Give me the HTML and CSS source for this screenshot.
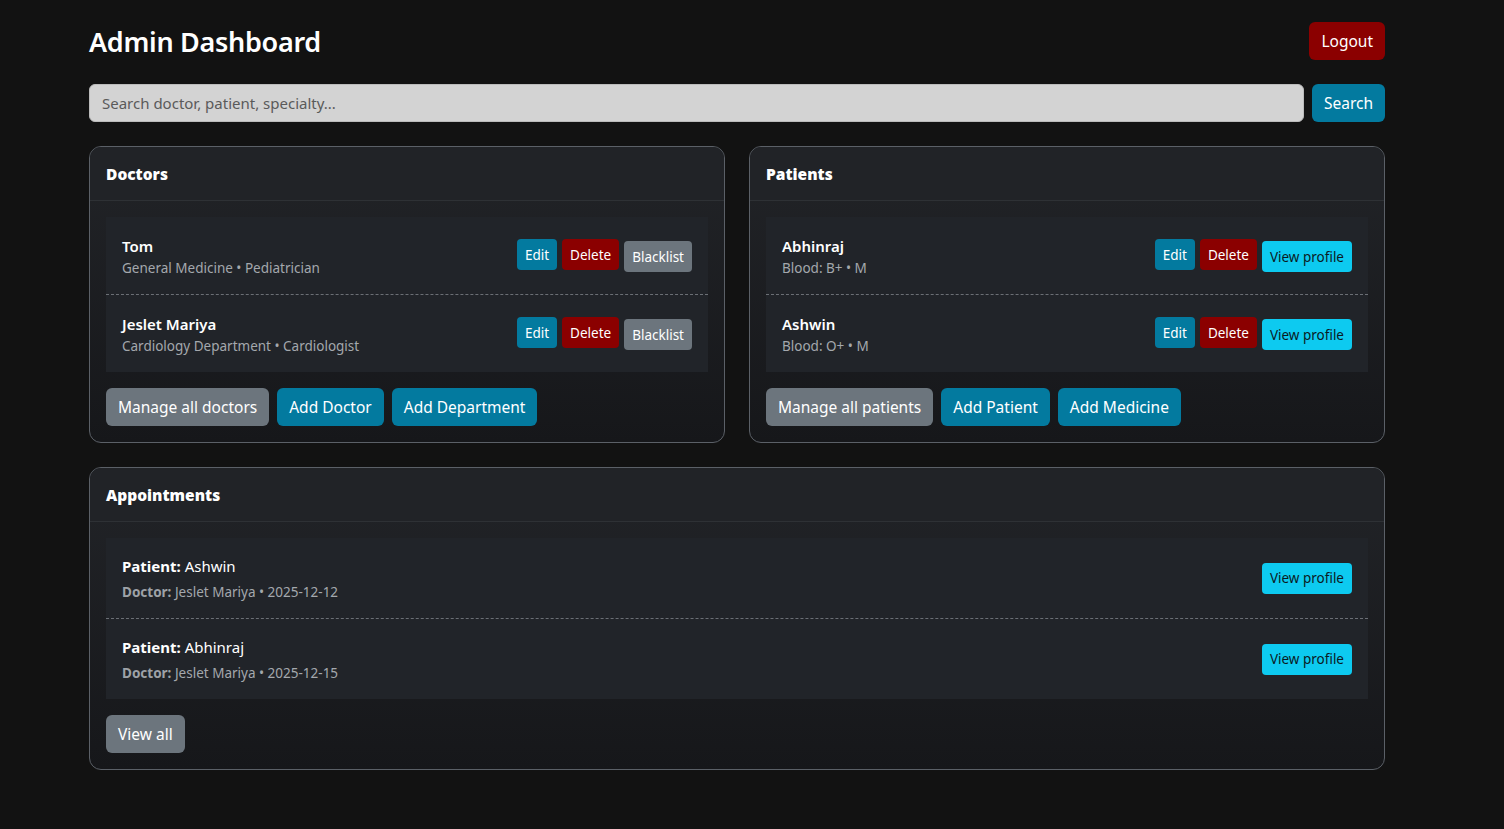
FILE: index.html
```html
<!DOCTYPE html>
<html lang="en">
<head>
  <meta charset="UTF-8">
  <meta name="viewport" content="width=device-width, initial-scale=1.0">
  <title>Admin Dashboard</title>
  <link rel="stylesheet" href="styles.css">
</head>
<body>
  <main class="wrap">
    <header class="top">
      <h1>Admin Dashboard</h1>
      <button class="btn btn-danger">Logout</button>
    </header>

    <form class="search" onsubmit="return false;">
      <input type="text" placeholder="Search doctor, patient, specialty...">
      <button class="btn btn-primary">Search</button>
    </form>

    <div class="grid">
      <!-- 의사 목록 -->
      <section class="card">
        <div class="card-head">Doctors</div>
        <div class="card-body">
          <ul class="list">
            <li class="item">
              <div class="info">
                <div class="name">Tom</div>
                <div class="sub">General Medicine &bull; Pediatrician</div>
              </div>
              <div class="actions">
                <button class="btn btn-sm btn-primary">Edit</button>
                <button class="btn btn-sm btn-danger">Delete</button>
                <button class="btn btn-sm btn-gray low">Blacklist</button>
              </div>
            </li>
            <li class="item">
              <div class="info">
                <div class="name">Jeslet Mariya</div>
                <div class="sub">Cardiology Department &bull; Cardiologist</div>
              </div>
              <div class="actions">
                <button class="btn btn-sm btn-primary">Edit</button>
                <button class="btn btn-sm btn-danger">Delete</button>
                <button class="btn btn-sm btn-gray low">Blacklist</button>
              </div>
            </li>
          </ul>
          <div class="foot">
            <button class="btn btn-gray">Manage all doctors</button>
            <button class="btn btn-primary">Add Doctor</button>
            <button class="btn btn-primary">Add Department</button>
          </div>
        </div>
      </section>

      <!-- 환자 목록 -->
      <section class="card">
        <div class="card-head">Patients</div>
        <div class="card-body">
          <ul class="list">
            <li class="item">
              <div class="info">
                <div class="name">Abhinraj</div>
                <div class="sub">Blood: B+ &bull; M</div>
              </div>
              <div class="actions">
                <button class="btn btn-sm btn-primary">Edit</button>
                <button class="btn btn-sm btn-danger">Delete</button>
                <button class="btn btn-sm btn-info low">View profile</button>
              </div>
            </li>
            <li class="item">
              <div class="info">
                <div class="name">Ashwin</div>
                <div class="sub">Blood: O+ &bull; M</div>
              </div>
              <div class="actions">
                <button class="btn btn-sm btn-primary">Edit</button>
                <button class="btn btn-sm btn-danger">Delete</button>
                <button class="btn btn-sm btn-info low">View profile</button>
              </div>
            </li>
          </ul>
          <div class="foot">
            <button class="btn btn-gray">Manage all patients</button>
            <button class="btn btn-primary">Add Patient</button>
            <button class="btn btn-primary">Add Medicine</button>
          </div>
        </div>
      </section>
    </div>

    <!-- 예약 목록 -->
    <section class="card">
      <div class="card-head">Appointments</div>
      <div class="card-body">
        <ul class="list">
          <li class="item appt">
            <div class="info">
              <div class="name"><b>Patient:</b> Ashwin</div>
              <div class="sub"><b>Doctor:</b> Jeslet Mariya &bull; 2025-12-12</div>
            </div>
            <div class="actions">
              <button class="btn btn-sm btn-info">View profile</button>
            </div>
          </li>
          <li class="item appt">
            <div class="info">
              <div class="name"><b>Patient:</b> Abhinraj</div>
              <div class="sub"><b>Doctor:</b> Jeslet Mariya &bull; 2025-12-15</div>
            </div>
            <div class="actions">
              <button class="btn btn-sm btn-info">View profile</button>
            </div>
          </li>
        </ul>
        <div class="foot">
          <button class="btn btn-gray">View all</button>
        </div>
      </div>
    </section>
  </main>
</body>
</html>
```

FILE: styles.css
```css
*{margin: 0; padding: 0; box-sizing: border-box;}
body{
  background: #121212;
  color: #fff;
  font-family: "Noto Sans", "Open Sans", sans-serif;
  font-size: 16px;
}
ul{list-style: none;}

.wrap{
  width: 1296px;
  margin-left: 89px;
  padding-top: 22px;
}

/* 상단 제목 */
.top{
  display: flex;
  justify-content: space-between;
  align-items: center;
  height: 38px;
}
.top h1{
  font-size: 27px;
  font-weight: 600;
  letter-spacing: -0.3px;
}

/* 검색 */
.search{
  display: flex;
  gap: 8px;
  margin-top: 24px;
}
.search input{
  flex: 1;
  height: 38px;
  padding: 0 12px;
  background: #d3d3d3;
  border: 1px solid #bbb;
  border-radius: 6px;
  font-family: inherit;
  font-size: 15px;
  color: #222;
}
.search input::placeholder{color: #5a5a5a;}

/* 버튼 */
.btn{
  font-family: inherit;
  font-size: 15.5px;
  color: #fff;
  border: none;
  border-radius: 6px;
  height: 38px;
  padding: 0 12px;
  cursor: pointer;
  white-space: nowrap;
}
.btn-primary{background: #037a9f;}
.btn-danger{background: #8b0000;}
.btn-gray{background: #6c757d;}
.btn-info{background: #0dcaf0; color: #0b1a1f;}
.btn-sm{
  height: 31px;
  padding: 0 8px;
  font-size: 13.5px;
  border-radius: 4px;
}
.low{margin-top: 2px;}

/* 카드 */
.grid{
  display: grid;
  grid-template-columns: 1fr 1fr;
  gap: 24px;
  margin: 24px 0 24px;
}
.card{
  border: 1px solid #5b6067;
  border-radius: 12px;
  background: linear-gradient(#222428, #16171a);
  overflow: hidden;
}
.card-head{
  height: 54px;
  padding: 0 16px;
  display: flex;
  align-items: center;
  font-weight: 900;
  font-size: 15.5px;
  background: #212327;
  border-bottom: 1px solid #2e3135;
}
.card-body{padding: 16px;}

.list{margin-bottom: 16px;}
.item{
  display: flex;
  justify-content: space-between;
  align-items: center;
  background: #212429;
  padding: 16px;
  height: 77px;
}
.item + .item{border-top: 1px dashed #6b6f75; height: 78px;}
.item.appt{height: 80px;}
.item.appt + .item.appt{height: 81px;}

.name{
  font-size: 15px;
  font-weight: 600;
  line-height: 24px;
}
.appt .name{font-weight: 400; margin-bottom: 4px;}
.sub{
  font-size: 13.5px;
  line-height: 20px;
  color: #a4a8ad;
}
.appt .sub b{color: #9ea2a7;}

.actions{
  display: flex;
  align-items: flex-start;
  gap: 5px;
}

.foot{
  display: flex;
  gap: 8px;
}
```
